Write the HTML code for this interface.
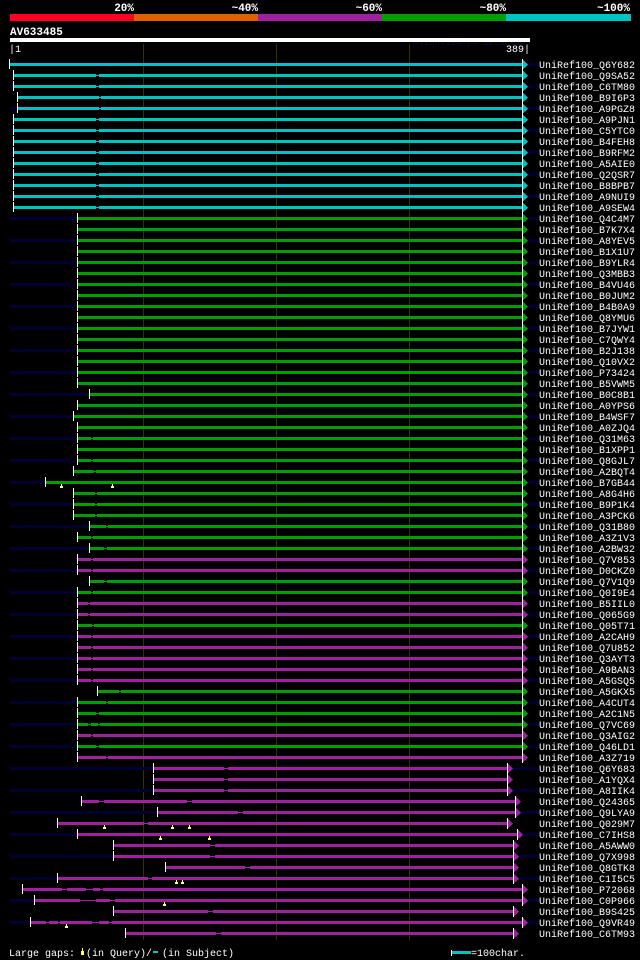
<!DOCTYPE html>
<html><head><meta charset="utf-8"><style>
html,body{margin:0;padding:0;background:#000;width:640px;height:960px;overflow:hidden}
svg{display:block}
text{font-family:"Liberation Mono",monospace;font-size:10px;fill:#fff}
.b{font-family:"Liberation Mono",monospace;font-weight:bold;font-size:11px}
</style></head><body>
<svg width="640" height="960" viewBox="0 0 640 960" shape-rendering="crispEdges">
<defs>
<symbol id="x"></symbol>
</defs>
<!-- header -->
<text class="b" x="134" y="11" text-anchor="end">20%</text>
<text class="b" x="258" y="11" text-anchor="end">~40%</text>
<text class="b" x="382" y="11" text-anchor="end">~60%</text>
<text class="b" x="506" y="11" text-anchor="end">~80%</text>
<text class="b" x="630" y="11" text-anchor="end">~100%</text>
<rect x="10" y="14" width="124" height="7" fill="#ff0020"/>
<rect x="134" y="14" width="124" height="7" fill="#e06000"/>
<rect x="258" y="14" width="124" height="7" fill="#a020a0"/>
<rect x="382" y="14" width="124" height="7" fill="#00a000"/>
<rect x="506" y="14" width="125" height="7" fill="#00c4c4"/>
<text class="b" x="10" y="35">AV633485</text>
<text x="413" y="45" style="fill:#0a0a40;font-size:9px">AlignView.pm Beta v1.7</text>
<rect x="10" y="38" width="520" height="4" fill="#fff"/>
<text x="9" y="52">|1</text>
<text x="530" y="52" text-anchor="end">389|</text>
<rect x="143" y="44" width="1" height="896" fill="#333300"/>
<rect x="276" y="44" width="1" height="896" fill="#333300"/>
<rect x="409" y="44" width="1" height="896" fill="#333300"/>

<g id="rows">
<!-- row template: navy (even), bar, gaps, tick, arrow, label -->
<g transform="translate(0,64)"><rect x="10" y="-1" width="529" height="3" fill="#000033"/><rect x="10" y="-1" width="512" height="3" fill="#00c4c4"/><rect x="9" y="-5" width="1" height="10" fill="#fff"/><polygon points="522,-5 528,1 522,6" fill="#00c4c4"/><rect x="522" y="-5" width="1" height="11" fill="#fff"/><text x="539" y="4">UniRef100_Q6Y682</text></g>
<g transform="translate(0,75)"><rect x="14" y="-1" width="508" height="3" fill="#00c4c4"/><rect x="96" y="-1" width="3" height="3" fill="#000"/><rect x="96" y="0" width="3" height="1" fill="#00c4c4"/><rect x="13" y="-5" width="1" height="10" fill="#fff"/><polygon points="522,-5 528,1 522,6" fill="#00c4c4"/><rect x="522" y="-5" width="1" height="11" fill="#fff"/><text x="539" y="4">UniRef100_Q9SA52</text></g>
<g transform="translate(0,86)"><rect x="10" y="-1" width="529" height="3" fill="#000033"/><rect x="14" y="-1" width="508" height="3" fill="#00c4c4"/><rect x="96" y="-1" width="3" height="3" fill="#000"/><rect x="96" y="0" width="3" height="1" fill="#00c4c4"/><rect x="13" y="-5" width="1" height="10" fill="#fff"/><polygon points="522,-5 528,1 522,6" fill="#00c4c4"/><rect x="522" y="-5" width="1" height="11" fill="#fff"/><text x="539" y="4">UniRef100_C6TM80</text></g>
<g transform="translate(0,97)"><rect x="18" y="-1" width="504" height="3" fill="#00c4c4"/><rect x="99" y="-1" width="2" height="3" fill="#000"/><rect x="99" y="0" width="2" height="1" fill="#00c4c4"/><rect x="17" y="-5" width="1" height="10" fill="#fff"/><polygon points="522,-5 528,1 522,6" fill="#00c4c4"/><rect x="522" y="-5" width="1" height="11" fill="#fff"/><text x="539" y="4">UniRef100_B9I6P3</text></g>
<g transform="translate(0,108)"><rect x="10" y="-1" width="529" height="3" fill="#000033"/><rect x="18" y="-1" width="504" height="3" fill="#00c4c4"/><rect x="99" y="-1" width="2" height="3" fill="#000"/><rect x="99" y="0" width="2" height="1" fill="#00c4c4"/><rect x="17" y="-5" width="1" height="10" fill="#fff"/><polygon points="522,-5 528,1 522,6" fill="#00c4c4"/><rect x="522" y="-5" width="1" height="11" fill="#fff"/><text x="539" y="4">UniRef100_A9PGZ8</text></g>
<g transform="translate(0,119)"><rect x="14" y="-1" width="508" height="3" fill="#00c4c4"/><rect x="96" y="-1" width="3" height="3" fill="#000"/><rect x="96" y="0" width="3" height="1" fill="#00c4c4"/><rect x="13" y="-5" width="1" height="10" fill="#fff"/><polygon points="522,-5 528,1 522,6" fill="#00c4c4"/><rect x="522" y="-5" width="1" height="11" fill="#fff"/><text x="539" y="4">UniRef100_A9PJN1</text></g>
<g transform="translate(0,130)"><rect x="10" y="-1" width="529" height="3" fill="#000033"/><rect x="14" y="-1" width="508" height="3" fill="#00c4c4"/><rect x="96" y="-1" width="3" height="3" fill="#000"/><rect x="96" y="0" width="3" height="1" fill="#00c4c4"/><rect x="13" y="-5" width="1" height="10" fill="#fff"/><polygon points="522,-5 528,1 522,6" fill="#00c4c4"/><rect x="522" y="-5" width="1" height="11" fill="#fff"/><text x="539" y="4">UniRef100_C5YTC0</text></g>
<g transform="translate(0,141)"><rect x="14" y="-1" width="508" height="3" fill="#00c4c4"/><rect x="96" y="-1" width="3" height="3" fill="#000"/><rect x="96" y="0" width="3" height="1" fill="#00c4c4"/><rect x="13" y="-5" width="1" height="10" fill="#fff"/><polygon points="522,-5 528,1 522,6" fill="#00c4c4"/><rect x="522" y="-5" width="1" height="11" fill="#fff"/><text x="539" y="4">UniRef100_B4FEH8</text></g>
<g transform="translate(0,152)"><rect x="10" y="-1" width="529" height="3" fill="#000033"/><rect x="14" y="-1" width="508" height="3" fill="#00c4c4"/><rect x="96" y="-1" width="3" height="3" fill="#000"/><rect x="96" y="0" width="3" height="1" fill="#00c4c4"/><rect x="13" y="-5" width="1" height="10" fill="#fff"/><polygon points="522,-5 528,1 522,6" fill="#00c4c4"/><rect x="522" y="-5" width="1" height="11" fill="#fff"/><text x="539" y="4">UniRef100_B9RFM2</text></g>
<g transform="translate(0,163)"><rect x="14" y="-1" width="508" height="3" fill="#00c4c4"/><rect x="96" y="-1" width="3" height="3" fill="#000"/><rect x="96" y="0" width="3" height="1" fill="#00c4c4"/><rect x="13" y="-5" width="1" height="10" fill="#fff"/><polygon points="522,-5 528,1 522,6" fill="#00c4c4"/><rect x="522" y="-5" width="1" height="11" fill="#fff"/><text x="539" y="4">UniRef100_A5AIE0</text></g>
<g transform="translate(0,174)"><rect x="10" y="-1" width="529" height="3" fill="#000033"/><rect x="14" y="-1" width="508" height="3" fill="#00c4c4"/><rect x="96" y="-1" width="3" height="3" fill="#000"/><rect x="96" y="0" width="3" height="1" fill="#00c4c4"/><rect x="13" y="-5" width="1" height="10" fill="#fff"/><polygon points="522,-5 528,1 522,6" fill="#00c4c4"/><rect x="522" y="-5" width="1" height="11" fill="#fff"/><text x="539" y="4">UniRef100_Q2QSR7</text></g>
<g transform="translate(0,185)"><rect x="14" y="-1" width="508" height="3" fill="#00c4c4"/><rect x="96" y="-1" width="3" height="3" fill="#000"/><rect x="96" y="0" width="3" height="1" fill="#00c4c4"/><rect x="13" y="-5" width="1" height="10" fill="#fff"/><polygon points="522,-5 528,1 522,6" fill="#00c4c4"/><rect x="522" y="-5" width="1" height="11" fill="#fff"/><text x="539" y="4">UniRef100_B8BPB7</text></g>
<g transform="translate(0,196)"><rect x="10" y="-1" width="529" height="3" fill="#000033"/><rect x="14" y="-1" width="508" height="3" fill="#00c4c4"/><rect x="96" y="-1" width="3" height="3" fill="#000"/><rect x="96" y="0" width="3" height="1" fill="#00c4c4"/><rect x="13" y="-5" width="1" height="10" fill="#fff"/><polygon points="522,-5 528,1 522,6" fill="#00c4c4"/><rect x="522" y="-5" width="1" height="11" fill="#fff"/><text x="539" y="4">UniRef100_A9NUI9</text></g>
<g transform="translate(0,207)"><rect x="14" y="-1" width="508" height="3" fill="#00c4c4"/><rect x="96" y="-1" width="3" height="3" fill="#000"/><rect x="96" y="0" width="3" height="1" fill="#00c4c4"/><rect x="13" y="-5" width="1" height="10" fill="#fff"/><polygon points="522,-5 528,1 522,6" fill="#00c4c4"/><rect x="522" y="-5" width="1" height="11" fill="#fff"/><text x="539" y="4">UniRef100_A9SEW4</text></g>

<g transform="translate(0,218)"><rect x="10" y="-1" width="529" height="3" fill="#000033"/><rect x="78" y="-1" width="444" height="3" fill="#00a000"/><rect x="77" y="-5" width="1" height="10" fill="#fff"/><polygon points="522,-5 528,1 522,6" fill="#00a000"/><rect x="522" y="-5" width="1" height="11" fill="#fff"/><text x="539" y="4">UniRef100_Q4C4M7</text></g>
<g transform="translate(0,229)"><rect x="78" y="-1" width="444" height="3" fill="#00a000"/><rect x="77" y="-5" width="1" height="10" fill="#fff"/><polygon points="522,-5 528,1 522,6" fill="#00a000"/><rect x="522" y="-5" width="1" height="11" fill="#fff"/><text x="539" y="4">UniRef100_B7K7X4</text></g>
<g transform="translate(0,240)"><rect x="10" y="-1" width="529" height="3" fill="#000033"/><rect x="78" y="-1" width="444" height="3" fill="#00a000"/><rect x="77" y="-5" width="1" height="10" fill="#fff"/><polygon points="522,-5 528,1 522,6" fill="#00a000"/><rect x="522" y="-5" width="1" height="11" fill="#fff"/><text x="539" y="4">UniRef100_A8YEV5</text></g>
<g transform="translate(0,251)"><rect x="78" y="-1" width="444" height="3" fill="#00a000"/><rect x="77" y="-5" width="1" height="10" fill="#fff"/><polygon points="522,-5 528,1 522,6" fill="#00a000"/><rect x="522" y="-5" width="1" height="11" fill="#fff"/><text x="539" y="4">UniRef100_B1X1U7</text></g>
<g transform="translate(0,262)"><rect x="10" y="-1" width="529" height="3" fill="#000033"/><rect x="78" y="-1" width="444" height="3" fill="#00a000"/><rect x="77" y="-5" width="1" height="10" fill="#fff"/><polygon points="522,-5 528,1 522,6" fill="#00a000"/><rect x="522" y="-5" width="1" height="11" fill="#fff"/><text x="539" y="4">UniRef100_B9YLR4</text></g>
<g transform="translate(0,273)"><rect x="78" y="-1" width="444" height="3" fill="#00a000"/><rect x="77" y="-5" width="1" height="10" fill="#fff"/><polygon points="522,-5 528,1 522,6" fill="#00a000"/><rect x="522" y="-5" width="1" height="11" fill="#fff"/><text x="539" y="4">UniRef100_Q3MBB3</text></g>
<g transform="translate(0,284)"><rect x="10" y="-1" width="529" height="3" fill="#000033"/><rect x="78" y="-1" width="444" height="3" fill="#00a000"/><rect x="77" y="-5" width="1" height="10" fill="#fff"/><polygon points="522,-5 528,1 522,6" fill="#00a000"/><rect x="522" y="-5" width="1" height="11" fill="#fff"/><text x="539" y="4">UniRef100_B4VU46</text></g>
<g transform="translate(0,295)"><rect x="78" y="-1" width="444" height="3" fill="#00a000"/><rect x="77" y="-5" width="1" height="10" fill="#fff"/><polygon points="522,-5 528,1 522,6" fill="#00a000"/><rect x="522" y="-5" width="1" height="11" fill="#fff"/><text x="539" y="4">UniRef100_B0JUM2</text></g>
<g transform="translate(0,306)"><rect x="10" y="-1" width="529" height="3" fill="#000033"/><rect x="78" y="-1" width="444" height="3" fill="#00a000"/><rect x="77" y="-5" width="1" height="10" fill="#fff"/><polygon points="522,-5 528,1 522,6" fill="#00a000"/><rect x="522" y="-5" width="1" height="11" fill="#fff"/><text x="539" y="4">UniRef100_B4B0A9</text></g>
<g transform="translate(0,317)"><rect x="78" y="-1" width="444" height="3" fill="#00a000"/><rect x="77" y="-5" width="1" height="10" fill="#fff"/><polygon points="522,-5 528,1 522,6" fill="#00a000"/><rect x="522" y="-5" width="1" height="11" fill="#fff"/><text x="539" y="4">UniRef100_Q8YMU6</text></g>
<g transform="translate(0,328)"><rect x="10" y="-1" width="529" height="3" fill="#000033"/><rect x="78" y="-1" width="444" height="3" fill="#00a000"/><rect x="77" y="-5" width="1" height="10" fill="#fff"/><polygon points="522,-5 528,1 522,6" fill="#00a000"/><rect x="522" y="-5" width="1" height="11" fill="#fff"/><text x="539" y="4">UniRef100_B7JYW1</text></g>
<g transform="translate(0,339)"><rect x="78" y="-1" width="444" height="3" fill="#00a000"/><rect x="77" y="-5" width="1" height="10" fill="#fff"/><polygon points="522,-5 528,1 522,6" fill="#00a000"/><rect x="522" y="-5" width="1" height="11" fill="#fff"/><text x="539" y="4">UniRef100_C7QWY4</text></g>
<g transform="translate(0,350)"><rect x="10" y="-1" width="529" height="3" fill="#000033"/><rect x="78" y="-1" width="444" height="3" fill="#00a000"/><rect x="77" y="-5" width="1" height="10" fill="#fff"/><polygon points="522,-5 528,1 522,6" fill="#00a000"/><rect x="522" y="-5" width="1" height="11" fill="#fff"/><text x="539" y="4">UniRef100_B2J138</text></g>
<g transform="translate(0,361)"><rect x="78" y="-1" width="444" height="3" fill="#00a000"/><rect x="77" y="-5" width="1" height="10" fill="#fff"/><polygon points="522,-5 528,1 522,6" fill="#00a000"/><rect x="522" y="-5" width="1" height="11" fill="#fff"/><text x="539" y="4">UniRef100_Q10VX2</text></g>
<g transform="translate(0,372)"><rect x="10" y="-1" width="529" height="3" fill="#000033"/><rect x="78" y="-1" width="444" height="3" fill="#00a000"/><rect x="77" y="-5" width="1" height="10" fill="#fff"/><polygon points="522,-5 528,1 522,6" fill="#00a000"/><rect x="522" y="-5" width="1" height="11" fill="#fff"/><text x="539" y="4">UniRef100_P73424</text></g>
<g transform="translate(0,383)"><rect x="78" y="-1" width="444" height="3" fill="#00a000"/><rect x="77" y="-5" width="1" height="10" fill="#fff"/><polygon points="522,-5 528,1 522,6" fill="#00a000"/><rect x="522" y="-5" width="1" height="11" fill="#fff"/><text x="539" y="4">UniRef100_B5VWM5</text></g>
<g transform="translate(0,394)"><rect x="10" y="-1" width="529" height="3" fill="#000033"/><rect x="90" y="-1" width="432" height="3" fill="#00a000"/><rect x="89" y="-5" width="1" height="10" fill="#fff"/><polygon points="522,-5 528,1 522,6" fill="#00a000"/><rect x="522" y="-5" width="1" height="11" fill="#fff"/><text x="539" y="4">UniRef100_B0C8B1</text></g>
<g transform="translate(0,405)"><rect x="78" y="-1" width="444" height="3" fill="#00a000"/><rect x="77" y="-5" width="1" height="10" fill="#fff"/><polygon points="522,-5 528,1 522,6" fill="#00a000"/><rect x="522" y="-5" width="1" height="11" fill="#fff"/><text x="539" y="4">UniRef100_A0YPS6</text></g>
<g transform="translate(0,416)"><rect x="10" y="-1" width="529" height="3" fill="#000033"/><rect x="74" y="-1" width="448" height="3" fill="#00a000"/><rect x="73" y="-5" width="1" height="10" fill="#fff"/><polygon points="522,-5 528,1 522,6" fill="#00a000"/><rect x="522" y="-5" width="1" height="11" fill="#fff"/><text x="539" y="4">UniRef100_B4WSF7</text></g>
<g transform="translate(0,427)"><rect x="78" y="-1" width="444" height="3" fill="#00a000"/><rect x="77" y="-5" width="1" height="10" fill="#fff"/><polygon points="522,-5 528,1 522,6" fill="#00a000"/><rect x="522" y="-5" width="1" height="11" fill="#fff"/><text x="539" y="4">UniRef100_A0ZJQ4</text></g>
<g transform="translate(0,438)"><rect x="10" y="-1" width="529" height="3" fill="#000033"/><rect x="78" y="-1" width="444" height="3" fill="#00a000"/><rect x="91" y="-1" width="2" height="3" fill="#000"/><rect x="91" y="0" width="2" height="1" fill="#00a000"/><rect x="77" y="-5" width="1" height="10" fill="#fff"/><polygon points="522,-5 528,1 522,6" fill="#00a000"/><rect x="522" y="-5" width="1" height="11" fill="#fff"/><text x="539" y="4">UniRef100_Q31M63</text></g>
<g transform="translate(0,449)"><rect x="78" y="-1" width="444" height="3" fill="#00a000"/><rect x="77" y="-5" width="1" height="10" fill="#fff"/><polygon points="522,-5 528,1 522,6" fill="#00a000"/><rect x="522" y="-5" width="1" height="11" fill="#fff"/><text x="539" y="4">UniRef100_B1XPP1</text></g>
<g transform="translate(0,460)"><rect x="10" y="-1" width="529" height="3" fill="#000033"/><rect x="78" y="-1" width="444" height="3" fill="#00a000"/><rect x="91" y="-1" width="2" height="3" fill="#000"/><rect x="91" y="0" width="2" height="1" fill="#00a000"/><rect x="77" y="-5" width="1" height="10" fill="#fff"/><polygon points="522,-5 528,1 522,6" fill="#00a000"/><rect x="522" y="-5" width="1" height="11" fill="#fff"/><text x="539" y="4">UniRef100_Q8GJL7</text></g>
<g transform="translate(0,471)"><rect x="74" y="-1" width="448" height="3" fill="#00a000"/><rect x="94" y="-1" width="2" height="3" fill="#000"/><rect x="94" y="0" width="2" height="1" fill="#00a000"/><rect x="73" y="-5" width="1" height="10" fill="#fff"/><polygon points="522,-5 528,1 522,6" fill="#00a000"/><rect x="522" y="-5" width="1" height="11" fill="#fff"/><text x="539" y="4">UniRef100_A2BQT4</text></g>
<g transform="translate(0,482)"><rect x="10" y="-1" width="529" height="3" fill="#000033"/><rect x="46" y="-1" width="476" height="3" fill="#00a000"/><rect x="45" y="-5" width="1" height="10" fill="#fff"/><rect x="60" y="4" width="3" height="2" fill="#ffff66"/><rect x="61" y="2" width="1" height="2" fill="#ffff66"/><rect x="111" y="4" width="3" height="2" fill="#ffff66"/><rect x="112" y="2" width="1" height="2" fill="#ffff66"/><polygon points="522,-5 528,1 522,6" fill="#00a000"/><rect x="522" y="-5" width="1" height="11" fill="#fff"/><text x="539" y="4">UniRef100_B7GB44</text></g>
<g transform="translate(0,493)"><rect x="74" y="-1" width="448" height="3" fill="#00a000"/><rect x="95" y="-1" width="2" height="3" fill="#000"/><rect x="95" y="0" width="2" height="1" fill="#00a000"/><rect x="73" y="-5" width="1" height="10" fill="#fff"/><polygon points="522,-5 528,1 522,6" fill="#00a000"/><rect x="522" y="-5" width="1" height="11" fill="#fff"/><text x="539" y="4">UniRef100_A8G4H6</text></g>
<g transform="translate(0,504)"><rect x="10" y="-1" width="529" height="3" fill="#000033"/><rect x="74" y="-1" width="448" height="3" fill="#00a000"/><rect x="95" y="-1" width="2" height="3" fill="#000"/><rect x="95" y="0" width="2" height="1" fill="#00a000"/><rect x="73" y="-5" width="1" height="10" fill="#fff"/><polygon points="522,-5 528,1 522,6" fill="#00a000"/><rect x="522" y="-5" width="1" height="11" fill="#fff"/><text x="539" y="4">UniRef100_B9P1K4</text></g>
<g transform="translate(0,515)"><rect x="74" y="-1" width="448" height="3" fill="#00a000"/><rect x="95" y="-1" width="2" height="3" fill="#000"/><rect x="95" y="0" width="2" height="1" fill="#00a000"/><rect x="73" y="-5" width="1" height="10" fill="#fff"/><polygon points="522,-5 528,1 522,6" fill="#00a000"/><rect x="522" y="-5" width="1" height="11" fill="#fff"/><text x="539" y="4">UniRef100_A3PCK6</text></g>
<g transform="translate(0,526)"><rect x="10" y="-1" width="529" height="3" fill="#000033"/><rect x="90" y="-1" width="432" height="3" fill="#00a000"/><rect x="106" y="-1" width="2" height="3" fill="#000"/><rect x="106" y="0" width="2" height="1" fill="#00a000"/><rect x="89" y="-5" width="1" height="10" fill="#fff"/><polygon points="522,-5 528,1 522,6" fill="#00a000"/><rect x="522" y="-5" width="1" height="11" fill="#fff"/><text x="539" y="4">UniRef100_Q31B80</text></g>
<g transform="translate(0,537)"><rect x="78" y="-1" width="444" height="3" fill="#00a000"/><rect x="91" y="-1" width="2" height="3" fill="#000"/><rect x="91" y="0" width="2" height="1" fill="#00a000"/><rect x="77" y="-5" width="1" height="10" fill="#fff"/><polygon points="522,-5 528,1 522,6" fill="#00a000"/><rect x="522" y="-5" width="1" height="11" fill="#fff"/><text x="539" y="4">UniRef100_A3Z1V3</text></g>
<g transform="translate(0,548)"><rect x="10" y="-1" width="529" height="3" fill="#000033"/><rect x="90" y="-1" width="432" height="3" fill="#00a000"/><rect x="104" y="-1" width="3" height="3" fill="#000"/><rect x="104" y="0" width="3" height="1" fill="#00a000"/><rect x="89" y="-5" width="1" height="10" fill="#fff"/><polygon points="522,-5 528,1 522,6" fill="#00a000"/><rect x="522" y="-5" width="1" height="11" fill="#fff"/><text x="539" y="4">UniRef100_A2BW32</text></g>
<g transform="translate(0,559)"><rect x="78" y="-1" width="444" height="3" fill="#a020a0"/><rect x="91" y="-1" width="2" height="3" fill="#000"/><rect x="91" y="0" width="2" height="1" fill="#a020a0"/><rect x="77" y="-5" width="1" height="10" fill="#fff"/><polygon points="522,-5 528,1 522,6" fill="#a020a0"/><rect x="522" y="-5" width="1" height="11" fill="#fff"/><text x="539" y="4">UniRef100_Q7V853</text></g>
<g transform="translate(0,570)"><rect x="10" y="-1" width="529" height="3" fill="#000033"/><rect x="78" y="-1" width="444" height="3" fill="#a020a0"/><rect x="91" y="-1" width="2" height="3" fill="#000"/><rect x="91" y="0" width="2" height="1" fill="#a020a0"/><rect x="77" y="-5" width="1" height="10" fill="#fff"/><polygon points="522,-5 528,1 522,6" fill="#a020a0"/><rect x="522" y="-5" width="1" height="11" fill="#fff"/><text x="539" y="4">UniRef100_D0CKZ0</text></g>
<g transform="translate(0,581)"><rect x="90" y="-1" width="432" height="3" fill="#00a000"/><rect x="104" y="-1" width="3" height="3" fill="#000"/><rect x="104" y="0" width="3" height="1" fill="#00a000"/><rect x="89" y="-5" width="1" height="10" fill="#fff"/><polygon points="522,-5 528,1 522,6" fill="#00a000"/><rect x="522" y="-5" width="1" height="11" fill="#fff"/><text x="539" y="4">UniRef100_Q7V1Q9</text></g>
<g transform="translate(0,592)"><rect x="10" y="-1" width="529" height="3" fill="#000033"/><rect x="78" y="-1" width="444" height="3" fill="#00a000"/><rect x="91" y="-1" width="2" height="3" fill="#000"/><rect x="91" y="0" width="2" height="1" fill="#00a000"/><rect x="77" y="-5" width="1" height="10" fill="#fff"/><polygon points="522,-5 528,1 522,6" fill="#00a000"/><rect x="522" y="-5" width="1" height="11" fill="#fff"/><text x="539" y="4">UniRef100_Q0I9E4</text></g>
<g transform="translate(0,603)"><rect x="78" y="-1" width="444" height="3" fill="#a020a0"/><rect x="88" y="-1" width="2" height="3" fill="#000"/><rect x="88" y="0" width="2" height="1" fill="#a020a0"/><rect x="77" y="-5" width="1" height="10" fill="#fff"/><polygon points="522,-5 528,1 522,6" fill="#a020a0"/><rect x="522" y="-5" width="1" height="11" fill="#fff"/><text x="539" y="4">UniRef100_B5IIL0</text></g>
<g transform="translate(0,614)"><rect x="10" y="-1" width="529" height="3" fill="#000033"/><rect x="78" y="-1" width="444" height="3" fill="#a020a0"/><rect x="88" y="-1" width="2" height="3" fill="#000"/><rect x="88" y="0" width="2" height="1" fill="#a020a0"/><rect x="77" y="-5" width="1" height="10" fill="#fff"/><polygon points="522,-5 528,1 522,6" fill="#a020a0"/><rect x="522" y="-5" width="1" height="11" fill="#fff"/><text x="539" y="4">UniRef100_Q065G9</text></g>
<g transform="translate(0,625)"><rect x="78" y="-1" width="444" height="3" fill="#00a000"/><rect x="92" y="-1" width="2" height="3" fill="#000"/><rect x="92" y="0" width="2" height="1" fill="#00a000"/><rect x="77" y="-5" width="1" height="10" fill="#fff"/><polygon points="522,-5 528,1 522,6" fill="#00a000"/><rect x="522" y="-5" width="1" height="11" fill="#fff"/><text x="539" y="4">UniRef100_Q05T71</text></g>
<g transform="translate(0,636)"><rect x="10" y="-1" width="529" height="3" fill="#000033"/><rect x="78" y="-1" width="444" height="3" fill="#a020a0"/><rect x="91" y="-1" width="2" height="3" fill="#000"/><rect x="91" y="0" width="2" height="1" fill="#a020a0"/><rect x="77" y="-5" width="1" height="10" fill="#fff"/><polygon points="522,-5 528,1 522,6" fill="#a020a0"/><rect x="522" y="-5" width="1" height="11" fill="#fff"/><text x="539" y="4">UniRef100_A2CAH9</text></g>
<g transform="translate(0,647)"><rect x="78" y="-1" width="444" height="3" fill="#a020a0"/><rect x="91" y="-1" width="2" height="3" fill="#000"/><rect x="91" y="0" width="2" height="1" fill="#a020a0"/><rect x="77" y="-5" width="1" height="10" fill="#fff"/><polygon points="522,-5 528,1 522,6" fill="#a020a0"/><rect x="522" y="-5" width="1" height="11" fill="#fff"/><text x="539" y="4">UniRef100_Q7U852</text></g>
<g transform="translate(0,658)"><rect x="10" y="-1" width="529" height="3" fill="#000033"/><rect x="78" y="-1" width="444" height="3" fill="#a020a0"/><rect x="91" y="-1" width="2" height="3" fill="#000"/><rect x="91" y="0" width="2" height="1" fill="#a020a0"/><rect x="77" y="-5" width="1" height="10" fill="#fff"/><polygon points="522,-5 528,1 522,6" fill="#a020a0"/><rect x="522" y="-5" width="1" height="11" fill="#fff"/><text x="539" y="4">UniRef100_Q3AYT3</text></g>
<g transform="translate(0,669)"><rect x="78" y="-1" width="444" height="3" fill="#a020a0"/><rect x="91" y="-1" width="2" height="3" fill="#000"/><rect x="91" y="0" width="2" height="1" fill="#a020a0"/><rect x="77" y="-5" width="1" height="10" fill="#fff"/><polygon points="522,-5 528,1 522,6" fill="#a020a0"/><rect x="522" y="-5" width="1" height="11" fill="#fff"/><text x="539" y="4">UniRef100_A9BAN3</text></g>
<g transform="translate(0,680)"><rect x="10" y="-1" width="529" height="3" fill="#000033"/><rect x="78" y="-1" width="444" height="3" fill="#a020a0"/><rect x="91" y="-1" width="2" height="3" fill="#000"/><rect x="91" y="0" width="2" height="1" fill="#a020a0"/><rect x="77" y="-5" width="1" height="10" fill="#fff"/><polygon points="522,-5 528,1 522,6" fill="#a020a0"/><rect x="522" y="-5" width="1" height="11" fill="#fff"/><text x="539" y="4">UniRef100_A5GSQ5</text></g>
<g transform="translate(0,691)"><rect x="98" y="-1" width="424" height="3" fill="#00a000"/><rect x="119" y="-1" width="2" height="3" fill="#000"/><rect x="119" y="0" width="2" height="1" fill="#00a000"/><rect x="97" y="-5" width="1" height="10" fill="#fff"/><polygon points="522,-5 528,1 522,6" fill="#00a000"/><rect x="522" y="-5" width="1" height="11" fill="#fff"/><text x="539" y="4">UniRef100_A5GKX5</text></g>
<g transform="translate(0,702)"><rect x="10" y="-1" width="529" height="3" fill="#000033"/><rect x="78" y="-1" width="444" height="3" fill="#00a000"/><rect x="106" y="-1" width="2" height="3" fill="#000"/><rect x="106" y="0" width="2" height="1" fill="#00a000"/><rect x="77" y="-5" width="1" height="10" fill="#fff"/><polygon points="522,-5 528,1 522,6" fill="#00a000"/><rect x="522" y="-5" width="1" height="11" fill="#fff"/><text x="539" y="4">UniRef100_A4CUT4</text></g>
<g transform="translate(0,713)"><rect x="78" y="-1" width="444" height="3" fill="#00a000"/><rect x="96" y="-1" width="3" height="3" fill="#000"/><rect x="96" y="0" width="3" height="1" fill="#00a000"/><rect x="77" y="-5" width="1" height="10" fill="#fff"/><polygon points="522,-5 528,1 522,6" fill="#00a000"/><rect x="522" y="-5" width="1" height="11" fill="#fff"/><text x="539" y="4">UniRef100_A2C1N5</text></g>
<g transform="translate(0,724)"><rect x="10" y="-1" width="529" height="3" fill="#000033"/><rect x="78" y="-1" width="444" height="3" fill="#00a000"/><rect x="88" y="-1" width="3" height="3" fill="#000"/><rect x="88" y="0" width="3" height="1" fill="#00a000"/><rect x="98" y="-1" width="2" height="3" fill="#000"/><rect x="98" y="0" width="2" height="1" fill="#00a000"/><rect x="77" y="-5" width="1" height="10" fill="#fff"/><polygon points="522,-5 528,1 522,6" fill="#00a000"/><rect x="522" y="-5" width="1" height="11" fill="#fff"/><text x="539" y="4">UniRef100_Q7VC69</text></g>
<g transform="translate(0,735)"><rect x="78" y="-1" width="444" height="3" fill="#a020a0"/><rect x="91" y="-1" width="2" height="3" fill="#000"/><rect x="91" y="0" width="2" height="1" fill="#a020a0"/><rect x="77" y="-5" width="1" height="10" fill="#fff"/><polygon points="522,-5 528,1 522,6" fill="#a020a0"/><rect x="522" y="-5" width="1" height="11" fill="#fff"/><text x="539" y="4">UniRef100_Q3AIG2</text></g>
<g transform="translate(0,746)"><rect x="10" y="-1" width="529" height="3" fill="#000033"/><rect x="78" y="-1" width="444" height="3" fill="#00a000"/><rect x="96" y="-1" width="3" height="3" fill="#000"/><rect x="96" y="0" width="3" height="1" fill="#00a000"/><rect x="77" y="-5" width="1" height="10" fill="#fff"/><polygon points="522,-5 528,1 522,6" fill="#00a000"/><rect x="522" y="-5" width="1" height="11" fill="#fff"/><text x="539" y="4">UniRef100_Q46LD1</text></g>
<g transform="translate(0,757)"><rect x="78" y="-1" width="444" height="3" fill="#a020a0"/><rect x="106" y="-1" width="2" height="3" fill="#000"/><rect x="106" y="0" width="2" height="1" fill="#a020a0"/><rect x="77" y="-5" width="1" height="10" fill="#fff"/><polygon points="522,-5 528,1 522,6" fill="#a020a0"/><rect x="522" y="-5" width="1" height="11" fill="#fff"/><text x="539" y="4">UniRef100_A3Z719</text></g>

<g transform="translate(0,768)"><rect x="10" y="-1" width="529" height="3" fill="#000033"/><rect x="154" y="-1" width="353" height="3" fill="#a020a0"/><rect x="224" y="-1" width="4" height="3" fill="#000"/><rect x="224" y="0" width="4" height="1" fill="#a020a0"/><rect x="153" y="-5" width="1" height="10" fill="#fff"/><polygon points="507,-5 513,1 507,6" fill="#a020a0"/><rect x="507" y="-5" width="1" height="11" fill="#fff"/><text x="539" y="4">UniRef100_Q6Y683</text></g>
<g transform="translate(0,779)"><rect x="154" y="-1" width="353" height="3" fill="#a020a0"/><rect x="224" y="-1" width="4" height="3" fill="#000"/><rect x="224" y="0" width="4" height="1" fill="#a020a0"/><rect x="153" y="-5" width="1" height="10" fill="#fff"/><polygon points="507,-5 513,1 507,6" fill="#a020a0"/><rect x="507" y="-5" width="1" height="11" fill="#fff"/><text x="539" y="4">UniRef100_A1YQX4</text></g>
<g transform="translate(0,790)"><rect x="10" y="-1" width="529" height="3" fill="#000033"/><rect x="154" y="-1" width="353" height="3" fill="#a020a0"/><rect x="224" y="-1" width="4" height="3" fill="#000"/><rect x="224" y="0" width="4" height="1" fill="#a020a0"/><rect x="153" y="-5" width="1" height="10" fill="#fff"/><polygon points="507,-5 513,1 507,6" fill="#a020a0"/><rect x="507" y="-5" width="1" height="11" fill="#fff"/><text x="539" y="4">UniRef100_A8IIK4</text></g>
<g transform="translate(0,801)"><rect x="82" y="-1" width="433" height="3" fill="#a020a0"/><rect x="99" y="-1" width="5" height="3" fill="#000"/><rect x="99" y="0" width="5" height="1" fill="#a020a0"/><rect x="187" y="-1" width="5" height="3" fill="#000"/><rect x="187" y="0" width="5" height="1" fill="#a020a0"/><rect x="81" y="-5" width="1" height="10" fill="#fff"/><polygon points="515,-5 521,1 515,6" fill="#a020a0"/><rect x="515" y="-5" width="1" height="11" fill="#fff"/><text x="539" y="4">UniRef100_Q24365</text></g>
<g transform="translate(0,812)"><rect x="10" y="-1" width="529" height="3" fill="#000033"/><rect x="158" y="-1" width="357" height="3" fill="#a020a0"/><rect x="238" y="-1" width="5" height="3" fill="#000"/><rect x="238" y="0" width="5" height="1" fill="#a020a0"/><rect x="157" y="-5" width="1" height="10" fill="#fff"/><polygon points="515,-5 521,1 515,6" fill="#a020a0"/><rect x="515" y="-5" width="1" height="11" fill="#fff"/><text x="539" y="4">UniRef100_Q9LYA9</text></g>
<g transform="translate(0,823)"><rect x="58" y="-1" width="449" height="3" fill="#a020a0"/><rect x="144" y="-1" width="4" height="3" fill="#000"/><rect x="144" y="0" width="4" height="1" fill="#a020a0"/><rect x="57" y="-5" width="1" height="10" fill="#fff"/><rect x="103" y="4" width="3" height="2" fill="#ffff66"/><rect x="104" y="2" width="1" height="2" fill="#ffff66"/><rect x="171" y="4" width="3" height="2" fill="#ffff66"/><rect x="172" y="2" width="1" height="2" fill="#ffff66"/><rect x="188" y="4" width="3" height="2" fill="#ffff66"/><rect x="189" y="2" width="1" height="2" fill="#ffff66"/><polygon points="507,-5 513,1 507,6" fill="#a020a0"/><rect x="507" y="-5" width="1" height="11" fill="#fff"/><text x="539" y="4">UniRef100_Q029M7</text></g>
<g transform="translate(0,834)"><rect x="10" y="-1" width="529" height="3" fill="#000033"/><rect x="78" y="-1" width="439" height="3" fill="#a020a0"/><rect x="77" y="-5" width="1" height="10" fill="#fff"/><rect x="159" y="4" width="3" height="2" fill="#ffff66"/><rect x="160" y="2" width="1" height="2" fill="#ffff66"/><rect x="208" y="4" width="3" height="2" fill="#ffff66"/><rect x="209" y="2" width="1" height="2" fill="#ffff66"/><polygon points="517,-5 523,1 517,6" fill="#a020a0"/><rect x="517" y="-5" width="1" height="11" fill="#fff"/><text x="539" y="4">UniRef100_C7IHS8</text></g>
<g transform="translate(0,845)"><rect x="114" y="-1" width="399" height="3" fill="#a020a0"/><rect x="210" y="-1" width="5" height="3" fill="#000"/><rect x="210" y="0" width="5" height="1" fill="#a020a0"/><rect x="113" y="-5" width="1" height="10" fill="#fff"/><polygon points="513,-5 519,1 513,6" fill="#a020a0"/><rect x="513" y="-5" width="1" height="11" fill="#fff"/><text x="539" y="4">UniRef100_A5AWW0</text></g>
<g transform="translate(0,856)"><rect x="10" y="-1" width="529" height="3" fill="#000033"/><rect x="114" y="-1" width="399" height="3" fill="#a020a0"/><rect x="210" y="-1" width="5" height="3" fill="#000"/><rect x="210" y="0" width="5" height="1" fill="#a020a0"/><rect x="113" y="-5" width="1" height="10" fill="#fff"/><polygon points="513,-5 519,1 513,6" fill="#a020a0"/><rect x="513" y="-5" width="1" height="11" fill="#fff"/><text x="539" y="4">UniRef100_Q7X998</text></g>
<g transform="translate(0,867)"><rect x="166" y="-1" width="347" height="3" fill="#a020a0"/><rect x="245" y="-1" width="5" height="3" fill="#000"/><rect x="245" y="0" width="5" height="1" fill="#a020a0"/><rect x="165" y="-5" width="1" height="10" fill="#fff"/><polygon points="513,-5 519,1 513,6" fill="#a020a0"/><rect x="513" y="-5" width="1" height="11" fill="#fff"/><text x="539" y="4">UniRef100_Q8GTK8</text></g>
<g transform="translate(0,878)"><rect x="10" y="-1" width="529" height="3" fill="#000033"/><rect x="58" y="-1" width="455" height="3" fill="#a020a0"/><rect x="148" y="-1" width="4" height="3" fill="#000"/><rect x="148" y="0" width="4" height="1" fill="#a020a0"/><rect x="57" y="-5" width="1" height="10" fill="#fff"/><rect x="175" y="4" width="3" height="2" fill="#ffff66"/><rect x="176" y="2" width="1" height="2" fill="#ffff66"/><rect x="181" y="4" width="3" height="2" fill="#ffff66"/><rect x="182" y="2" width="1" height="2" fill="#ffff66"/><polygon points="513,-5 519,1 513,6" fill="#a020a0"/><rect x="513" y="-5" width="1" height="11" fill="#fff"/><text x="539" y="4">UniRef100_C1I5C5</text></g>
<g transform="translate(0,889)"><rect x="23" y="-1" width="499" height="3" fill="#a020a0"/><rect x="62" y="-1" width="5" height="3" fill="#000"/><rect x="62" y="0" width="5" height="1" fill="#a020a0"/><rect x="86" y="-1" width="7" height="3" fill="#000"/><rect x="86" y="0" width="7" height="1" fill="#a020a0"/><rect x="100" y="-1" width="3" height="3" fill="#000"/><rect x="100" y="0" width="3" height="1" fill="#a020a0"/><rect x="22" y="-5" width="1" height="10" fill="#fff"/><polygon points="522,-5 528,1 522,6" fill="#a020a0"/><rect x="522" y="-5" width="1" height="11" fill="#fff"/><text x="539" y="4">UniRef100_P72068</text></g>
<g transform="translate(0,900)"><rect x="10" y="-1" width="529" height="3" fill="#000033"/><rect x="35" y="-1" width="487" height="3" fill="#a020a0"/><rect x="80" y="-1" width="16" height="3" fill="#000"/><rect x="80" y="0" width="16" height="1" fill="#a020a0"/><rect x="110" y="-1" width="5" height="3" fill="#000"/><rect x="110" y="0" width="5" height="1" fill="#a020a0"/><rect x="34" y="-5" width="1" height="10" fill="#fff"/><rect x="163" y="4" width="3" height="2" fill="#ffff66"/><rect x="164" y="2" width="1" height="2" fill="#ffff66"/><polygon points="522,-5 528,1 522,6" fill="#a020a0"/><rect x="522" y="-5" width="1" height="11" fill="#fff"/><text x="539" y="4">UniRef100_C0P966</text></g>
<g transform="translate(0,911)"><rect x="114" y="-1" width="399" height="3" fill="#a020a0"/><rect x="208" y="-1" width="5" height="3" fill="#000"/><rect x="208" y="0" width="5" height="1" fill="#a020a0"/><rect x="113" y="-5" width="1" height="10" fill="#fff"/><polygon points="513,-5 519,1 513,6" fill="#a020a0"/><rect x="513" y="-5" width="1" height="11" fill="#fff"/><text x="539" y="4">UniRef100_B9S425</text></g>
<g transform="translate(0,922)"><rect x="10" y="-1" width="529" height="3" fill="#000033"/><rect x="31" y="-1" width="491" height="3" fill="#a020a0"/><rect x="46" y="-1" width="3" height="3" fill="#000"/><rect x="46" y="0" width="3" height="1" fill="#a020a0"/><rect x="58" y="-1" width="2" height="3" fill="#000"/><rect x="58" y="0" width="2" height="1" fill="#a020a0"/><rect x="92" y="-1" width="7" height="3" fill="#000"/><rect x="92" y="0" width="7" height="1" fill="#a020a0"/><rect x="109" y="-1" width="3" height="3" fill="#000"/><rect x="109" y="0" width="3" height="1" fill="#a020a0"/><rect x="30" y="-5" width="1" height="10" fill="#fff"/><rect x="65" y="4" width="3" height="2" fill="#ffff66"/><rect x="66" y="2" width="1" height="2" fill="#ffff66"/><polygon points="522,-5 528,1 522,6" fill="#a020a0"/><rect x="522" y="-5" width="1" height="11" fill="#fff"/><text x="539" y="4">UniRef100_Q9VR49</text></g>
<g transform="translate(0,933)"><rect x="126" y="-1" width="387" height="3" fill="#a020a0"/><rect x="216" y="-1" width="5" height="3" fill="#000"/><rect x="216" y="0" width="5" height="1" fill="#a020a0"/><rect x="125" y="-5" width="1" height="10" fill="#fff"/><polygon points="513,-5 519,1 513,6" fill="#a020a0"/><rect x="513" y="-5" width="1" height="11" fill="#fff"/><text x="539" y="4">UniRef100_C6TM93</text></g>
</g>

<!-- footer -->
<text x="9" y="956">Large gaps:</text>
<rect x="81" y="951" width="3" height="4" fill="#ffff66"/><rect x="82" y="948" width="1" height="3" fill="#ffff66"/>
<text x="86" y="956">(in Query)/</text>
<rect x="153" y="951" width="5" height="2" fill="#00c4c4"/>
<text x="162" y="956">(in Subject)</text>
<rect x="451" y="950" width="1" height="6" fill="#fff"/>
<rect x="452" y="951" width="19" height="3" fill="#00c4c4"/>
<text x="471" y="956">=100char.</text>
</svg>
</body></html>
